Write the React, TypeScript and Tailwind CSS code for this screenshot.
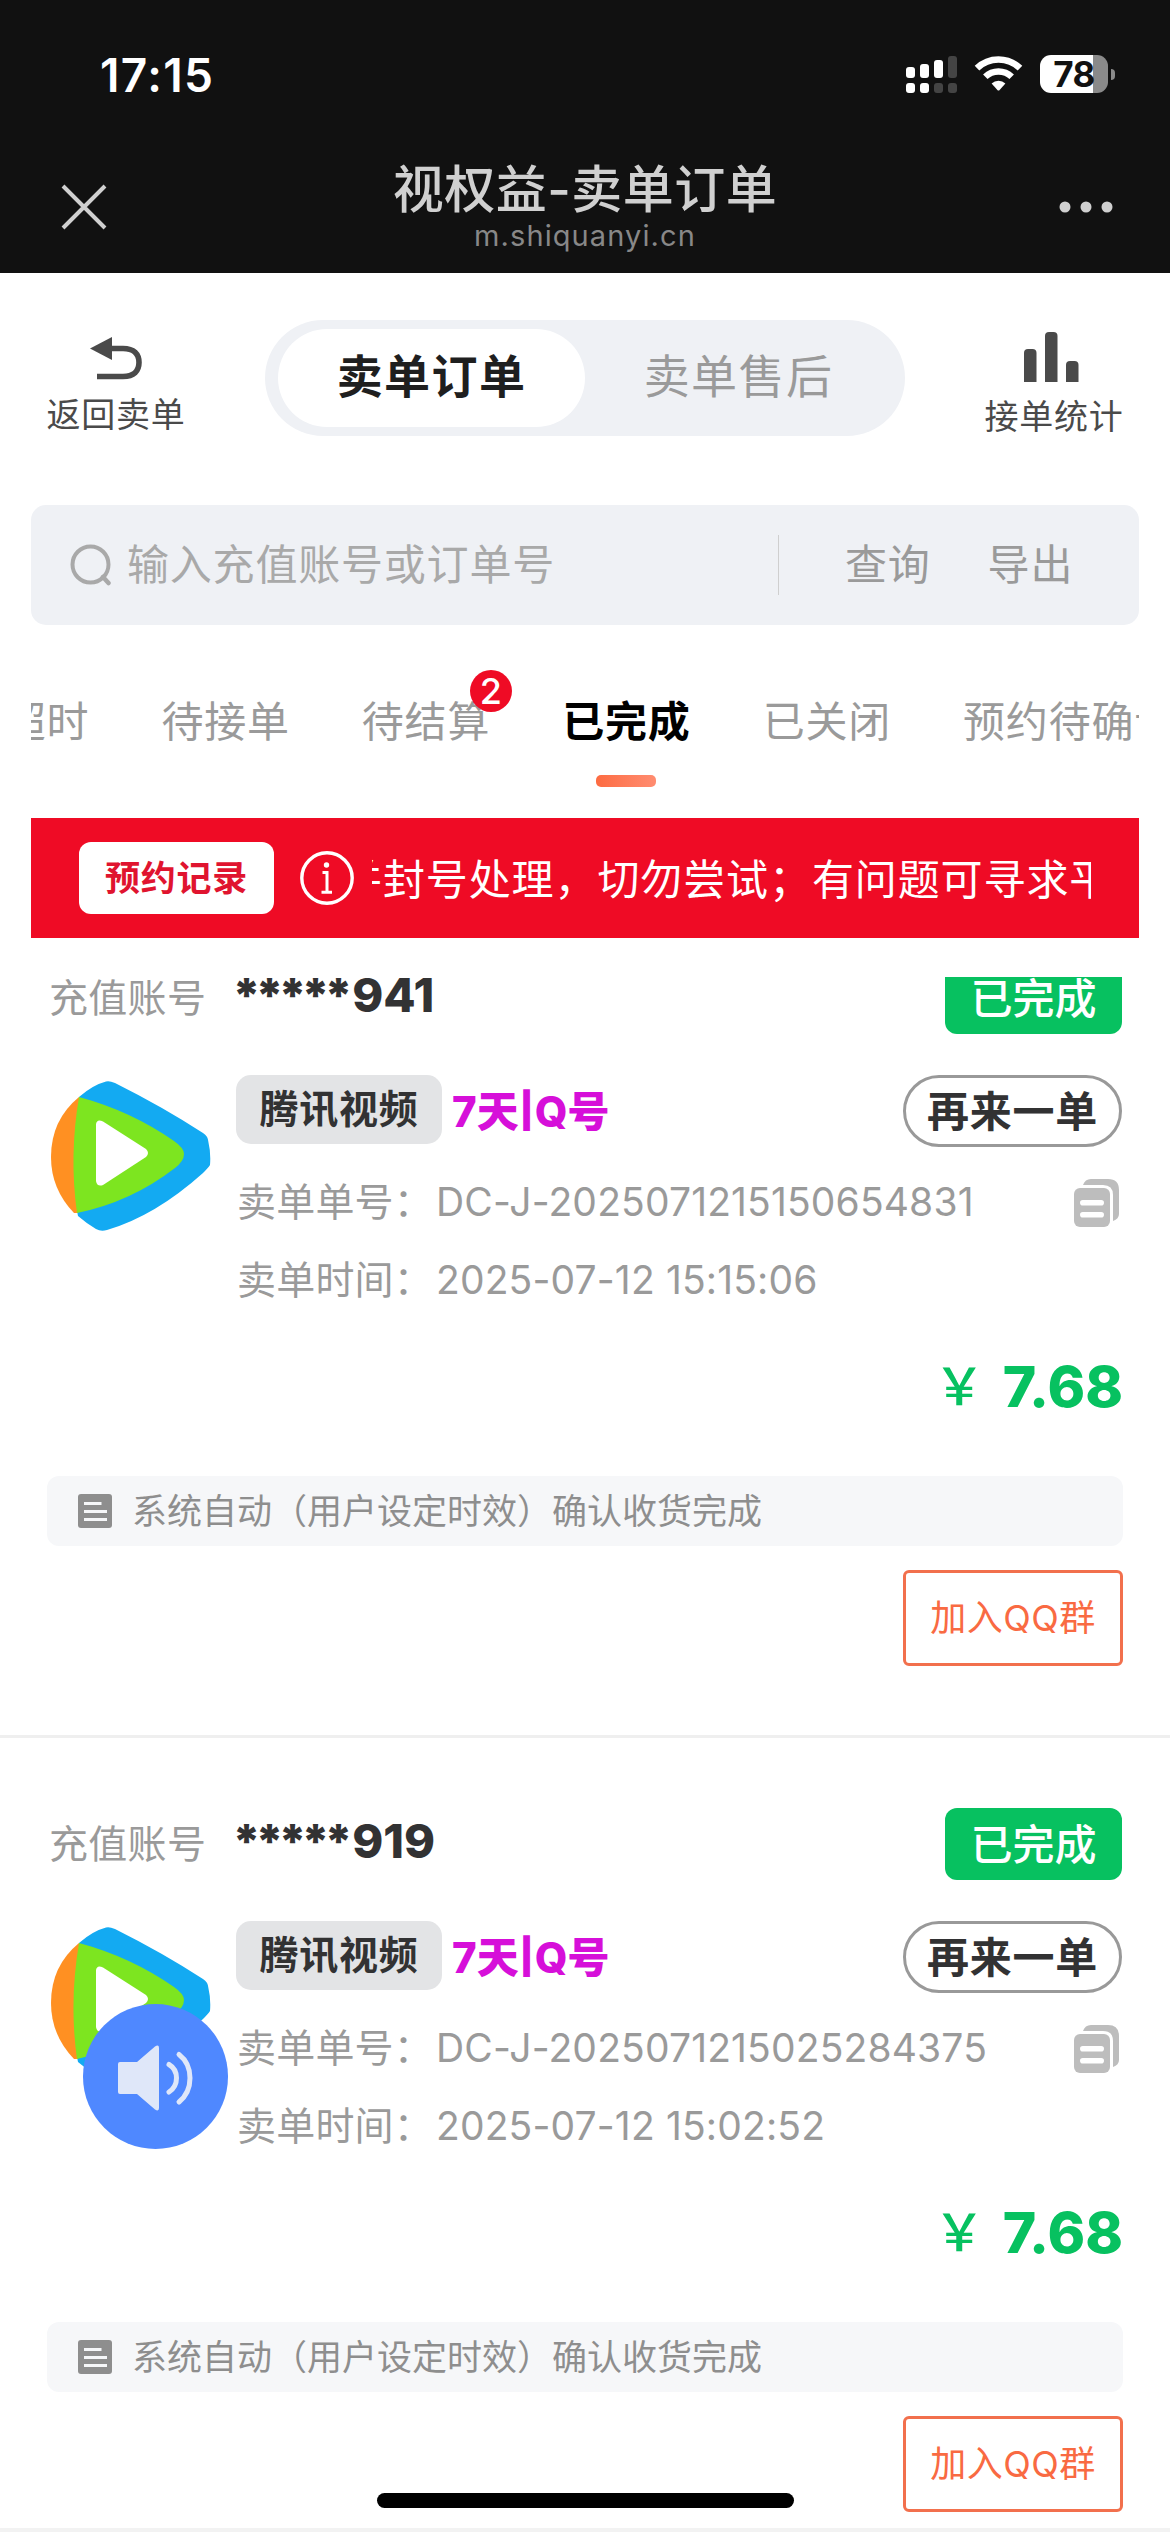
import clsx from 'clsx';

interface Order {
  account: string;
  product: string;
  spec: string[];
  orderNo: string;
  time: string;
  price: string;
  remark: string;
}

const orders: Order[] = [
  {
    account: '*****941',
    product: '腾讯视频',
    spec: ['7天', 'Q号'],
    orderNo: 'DC-J-2025071215150654831',
    time: '2025-07-12 15:15:06',
    price: '7.68',
    remark: '系统自动（用户设定时效）确认收货完成',
  },
  {
    account: '*****919',
    product: '腾讯视频',
    spec: ['7天', 'Q号'],
    orderNo: 'DC-J-2025071215025284375',
    time: '2025-07-12 15:02:52',
    price: '7.68',
    remark: '系统自动（用户设定时效）确认收货完成',
  },
];

const tabs: { label: string; badge?: number }[] = [
  { label: '已超时' },
  { label: '待接单' },
  { label: '待结算', badge: 2 },
  { label: '已完成' },
  { label: '已关闭' },
  { label: '预约待确认' },
];

const SignalIcon = () => (
  <svg width="51" height="38" viewBox="0 0 51 38" fill="#fff">
    <rect x="0" y="12" width="9" height="11" rx="3" />
    <rect x="14" y="9" width="9" height="14" rx="3" />
    <rect x="28" y="5" width="9" height="18" rx="3" />
    <rect x="42" y="1" width="9" height="22" rx="3" fill="#444" />
    <rect x="0" y="28" width="9" height="10" rx="3" />
    <rect x="14" y="28" width="9" height="10" rx="3" />
    <rect x="28" y="28" width="9" height="10" rx="3" fill="#444" />
    <rect x="42" y="28" width="9" height="10" rx="3" fill="#444" />
  </svg>
);

const WifiIcon = () => (
  <svg width="49" height="36" viewBox="0 0 49 36" fill="none">
    <path d="M3 13.2a31 31 0 0 1 43 0" stroke="#fff" strokeWidth="6.6" />
    <path d="M11.3 21.8a19 19 0 0 1 26.4 0" stroke="#fff" strokeWidth="6.4" />
    <path
      d="M17.6 28.6a10 10 0 0 1 13.8 0L25.6 35a1.5 1.5 0 0 1-2.2 0z"
      fill="#fff"
    />
  </svg>
);

const Battery = () => (
  <div className="flex items-center gap-[3px]">
    <div className="flex h-[38px] w-[68px] items-center justify-center rounded-[11px] bg-linear-to-r from-white from-78% to-[#8a8a8a] to-78%">
      <span className="text-[35px] font-bold leading-none tracking-[-0.5px] text-[#111]">
        78
      </span>
    </div>
    <div className="h-[11px] w-1 rounded-r-full bg-[#8a8a8a]" />
  </div>
);

const VideoLogo = () => (
  <svg width="160" height="150" viewBox="0 0 160 150">
    <path
      d="M28 16Q42 4 55 .6Q58-.5 64 2Q112 26 152 52Q157 55 157.400 61Q160 72 159 84Q157 87 152 92Q104 135 56 149Q50 151 45 148Q35 142 27 135L26 130Z"
      fill="#13aaf2"
    />
    <path d="M28 16Q0 39 0 76Q0 108 23 132L27 132Z" fill="#ff9022" />
    <path
      d="M28 16Q80 30 123 60Q133 67 133 73Q133 80 124 87Q80 121 26 132Q18 75 28 16Z"
      fill="#7de520"
    />
    <path
      d="M45 43Q46 37.500 52 40.500L95 68Q99 72 95 76L52 104Q46 106 45 100Z"
      fill="#fff"
    />
  </svg>
);

const CopyIcon = () => (
  <svg width="46" height="48" viewBox="0 0 46 48" fill="#bdbdbd">
    <path d="M9 6Q11 0 17 0H34Q45 0 45 11V35Q45 40 39 42V16Q39 6 29 6Z" />
    <rect x="0" y="9" width="36" height="39" rx="6" />
    <rect x="6" y="21" width="24" height="5.600" rx="2.800" fill="#fff" />
    <rect x="6" y="33" width="24" height="5.600" rx="2.800" fill="#fff" />
  </svg>
);

const NoteIcon = () => (
  <svg width="34" height="34" viewBox="0 0 34 34">
    <rect width="34" height="34" rx="3" fill="#8e8e8e" />
    <path
      d="M6 9.500h17.500M6 17.500h23M6 25.500h23"
      stroke="#f6f7f9"
      strokeWidth="2.800"
    />
  </svg>
);

const StatusBar = () => (
  <div className="flex h-[150px] items-start justify-between pl-[100px] pr-[55px] pt-[55px]">
    <span className="text-[46px] font-semibold leading-[40px] tracking-[1.400px] text-white">
      17:15
    </span>
    <div className="flex items-start gap-[17px]">
      <SignalIcon />
      <WifiIcon />
      <Battery />
    </div>
  </div>
);

const NavBar = () => (
  <div className="flex h-[123px] justify-between px-[57px] text-[#d0d0d0]">
    <svg className="mt-[32px]" width="54" height="50" viewBox="0 0 54 50">
      <path d="M6 4L48 46M48 4L6 46" stroke="currentColor" strokeWidth="4" />
    </svg>
    <div className="flex flex-col items-center pt-[9px]">
      <h1 className="text-[51px] font-medium leading-[62px] tracking-[0.5px]">
        视权益-卖单订单
      </h1>
      <p className="-mt-px text-[29px] leading-[32px] tracking-[1.100px] text-[#888]">
        m.shiquanyi.cn
      </p>
    </div>
    <svg className="mt-[32px]" width="54" height="50" viewBox="0 0 54 50">
      <g fill="currentColor">
        <circle cx="6" cy="25" r="5.500" />
        <circle cx="27" cy="25" r="5.500" />
        <circle cx="48" cy="25" r="5.500" />
      </g>
    </svg>
  </div>
);

const TopSwitch = () => (
  <div className="flex h-[232px] justify-between px-[46px] pt-[47px] text-[#4a4a4a]">
    <div className="flex w-[140px] flex-col items-center pt-[17px]">
      <svg width="53" height="43" viewBox="0 0 53 43">
        <path d="M0 11.500L22 0V23Z" fill="currentColor" />
        <path
          d="M20 11.500H33C44 11.500 49 17 49 25.500S44 39.500 33 39.500H7"
          fill="none"
          stroke="currentColor"
          strokeWidth="5.600"
        />
      </svg>
      <span className="mt-[10px] whitespace-nowrap text-[34px] leading-[50px] tracking-[0.8px]">
        返回卖单
      </span>
    </div>
    <div className="flex h-[116px] w-[640px] items-center rounded-full bg-[#eff1f5] px-[13px] text-[46px] tracking-[1.400px]">
      <div className="flex h-[98px] w-[307px] items-center justify-center rounded-full bg-white pb-[3px] font-semibold text-[#1f1f1f]">
        卖单订单
      </div>
      <div className="flex h-[98px] w-[307px] items-center justify-center pb-[3px] text-[#9a9a9a]">
        卖单售后
      </div>
    </div>
    <div className="flex w-[140px] flex-col items-center pt-3">
      <svg
        className="mr-[6px]"
        width="55"
        height="50"
        viewBox="0 0 55 50"
        fill="currentColor"
      >
        <path d="M0 50V21Q0 17 4 17H8.500Q12.500 17 12.500 21V50Z" />
        <path d="M21 50V4Q21 0 25 0H29.500Q33.500 0 33.500 4V50Z" />
        <path d="M42 50V33Q42 29 46 29H50.500Q54.500 29 54.500 33V50Z" />
      </svg>
      <span className="mt-[10px] whitespace-nowrap text-[34px] leading-[50px] tracking-[0.8px]">
        接单统计
      </span>
    </div>
  </div>
);

const SearchBar = () => (
  <div className="mx-[31px] flex h-[120px] items-center rounded-[15px] bg-[#eff1f5] pl-[39px] text-[42px] leading-[60px] tracking-[0.8px] text-[#9a9a9a]">
    <svg width="42" height="42" viewBox="0 0 42 42" fill="none">
      <circle cx="20.500" cy="20.500" r="18" stroke="#a9a9a9" strokeWidth="4" />
      <path
        d="M33 33l5.500 6"
        stroke="#a9a9a9"
        strokeWidth="4.500"
        strokeLinecap="round"
      />
    </svg>
    <span className="w-[652px] pl-[15px] text-[#a9a9a9]">
      输入充值账号或订单号
    </span>
    <div className="ml-[14px] h-[60px] w-px bg-[#cfcfcf]" />
    <span className="ml-[66px]">查询</span>
    <span className="ml-[57px]">导出</span>
  </div>
);

const TabBar = () => (
  <div className="mx-[31px] h-[193px] overflow-hidden">
    <div className="-ml-[70px] flex gap-[72px] pt-[67px] text-[42px] leading-[60px] tracking-[0.8px] text-[#9a9a9a]">
      {tabs.map(tab => {
        const active = tab.label === '已完成';
        return (
          <div
            key={tab.label}
            className={clsx(
              'relative shrink-0 whitespace-nowrap',
              active && 'font-semibold text-black'
            )}
          >
            {tab.label}
            {tab.badge && (
              <span className="absolute -top-[22px] left-[108px] flex size-[42px] items-center justify-center rounded-full bg-[#ef0b25] text-[36px] font-medium leading-none tracking-normal text-white">
                {tab.badge}
              </span>
            )}
            {active && (
              <div className="mx-auto mt-[23px] h-3 w-[60px] rounded-[5px] bg-linear-to-r from-[#fd6b41] to-[#ff8c70]" />
            )}
          </div>
        );
      })}
    </div>
  </div>
);

const NoticeBar = () => (
  <div className="mx-[31px] flex h-[120px] items-center bg-[#ef0b25] px-12 text-white">
    <div className="flex h-[72px] w-[195px] items-center justify-center rounded-xl bg-white text-[35px] font-semibold tracking-[0.8px] text-[#e0142f]">
      预约记录
    </div>
    <svg
      className="ml-[26px]"
      width="54"
      height="54"
      viewBox="0 0 54 54"
      fill="none"
      stroke="#fff"
    >
      <circle cx="27" cy="27" r="25.200" strokeWidth="3.400" />
      <path d="M22.500 21.500H27V41M21.500 41.200H32" strokeWidth="3" />
      <circle cx="26.500" cy="14" r="2.700" fill="#fff" stroke="none" />
    </svg>
    <div className="ml-[18px] w-[719px] overflow-hidden">
      <p className="-ml-[32px] whitespace-nowrap pt-[3px] text-[42px] leading-[60px] tracking-[0.9px]">
        并封号处理，切勿尝试；有问题可寻求平台
      </p>
    </div>
  </div>
);

const OrderCard = ({ order }: { order: Order }) => {
  const rows = [
    { label: '卖单单号：', value: order.orderNo, copy: true },
    { label: '卖单时间：', value: order.time, copy: false },
  ];
  // the masked part is set tighter than the visible digits
  const mask = order.account.slice(0, 5);
  const digits = order.account.slice(5);

  return (
    <div className="flex h-[846px] flex-col border-b-3 border-[#efefef] px-[47px] pt-[70px]">
      <div className="flex h-[72px] items-center">
        <span className="ml-[2px] text-[39px] tracking-[0.3px] text-[#9a9a9a]">
          充值账号
        </span>
        <div className="ml-[26px] pb-[6px] text-[47px] font-extrabold leading-[60px] text-[#323233]">
          <span className="font-black tracking-[-5.600px]">{mask}</span>
          <span className="ml-[5px]">{digits}</span>
        </div>
        <div className="ml-auto mr-px flex h-[72px] w-[177px] items-center justify-center rounded-xl bg-[#07c160] text-[42px] font-medium text-white">
          已完成
        </div>
      </div>

      <div className="mt-[41px] flex">
        <div className="ml-1 w-[185px] shrink-0 pt-[6px]">
          <VideoLogo />
        </div>
        <div className="flex-1">
          <div className="flex h-[72px] items-center">
            <span className="mb-[3px] flex h-[69px] w-[206px] items-center justify-center rounded-[15px] bg-[#e3e4e6] text-[39px] font-semibold tracking-[0.8px] text-[#323233]">
              {order.product}
            </span>
            <div className="ml-[10px] flex items-center text-[42px] font-extrabold text-[#d60fd9]">
              <span>{order.spec[0]}</span>
              <span className="w-[16px] pb-[2px] text-center text-[35px] font-black">
                |
              </span>
              <span>{order.spec[1]}</span>
            </div>
            <div className="ml-auto mr-px flex h-[72px] w-[219px] items-center justify-center rounded-full border-3 border-[#999] text-[42px] font-semibold tracking-[0.8px] text-[#323233]">
              再来一单
            </div>
          </div>
          <div className="mt-4">
            {rows.map(row => (
              <div
                key={row.label}
                className="flex h-[78px] items-center pt-px text-[39px] tracking-[0.15px] text-[#9a9a9a]"
              >
                <span className="ml-px w-[199px] whitespace-nowrap tracking-[0.2px]">
                  {row.label}
                </span>
                <span className="whitespace-nowrap">{row.value}</span>
                {row.copy && (
                  <div className="ml-auto mr-[3px]">
                    <CopyIcon />
                  </div>
                )}
              </div>
            ))}
          </div>
          <div className="mt-8 flex h-[72px] items-center justify-end text-[#07c160]">
            <span className="mr-[18px] text-[51px] font-medium">￥</span>
            <span className="text-[57px] font-extrabold">{order.price}</span>
          </div>
        </div>
      </div>

      <div className="mt-[53px] flex h-[70px] items-center rounded-xl bg-[#f6f7f9] pl-[31px]">
        <NoteIcon />
        <span className="ml-5 text-[35px] text-[#8e8e8e]">{order.remark}</span>
      </div>
      <div className="mt-6 flex h-[96px] w-[220px] items-center justify-center self-end rounded-md border-3 border-[#f2704d] text-[36px] tracking-[0.5px] text-[#f96a42]">
        加入QQ群
      </div>
    </div>
  );
};

const SoundButton = () => (
  <div className="absolute left-[83px] top-[2004px] size-[145px] rounded-full bg-[#4f88ff]">
    <svg width="145" height="145" viewBox="0 0 145 145" fill="none">
      <path
        d="M37 58H54L72 42.500Q76 40 76 44V104Q76 108 72 105.500L54 90H37Q35 90 35 88V60Q35 58 37 58Z"
        fill="#dfe7f9"
      />
      <path
        d="M86 60.500Q93.500 65 93.500 74T86 88M96 50.500Q107 59 107 74T96 98"
        stroke="#dfe7f9"
        strokeWidth="5"
        strokeLinecap="round"
      />
    </svg>
  </div>
);

const App = () => {
  return (
    <div className="relative flex h-[2532px] w-[1170px] flex-col overflow-hidden bg-white font-['Inter','Noto_Sans_CJK_SC',sans-serif]">
      <header className="h-[273px] shrink-0 bg-[#111]">
        <StatusBar />
        <NavBar />
      </header>
      <TopSwitch />
      <SearchBar />
      <TabBar />
      <NoticeBar />

      {/* order list, scrolled a little under the notice */}
      <div className="mt-[39px] h-[1551px] shrink-0 overflow-hidden">
        <div className="-mt-[85px]">
          {orders.map(order => (
            <OrderCard key={order.orderNo} order={order} />
          ))}
        </div>
      </div>
      <div className="h-1 shrink-0 bg-[#f2f2f2]" />

      <SoundButton />
      <div className="absolute bottom-6 left-[377px] h-[15px] w-[417px] rounded-full bg-black" />
    </div>
  );
};

export default App;
